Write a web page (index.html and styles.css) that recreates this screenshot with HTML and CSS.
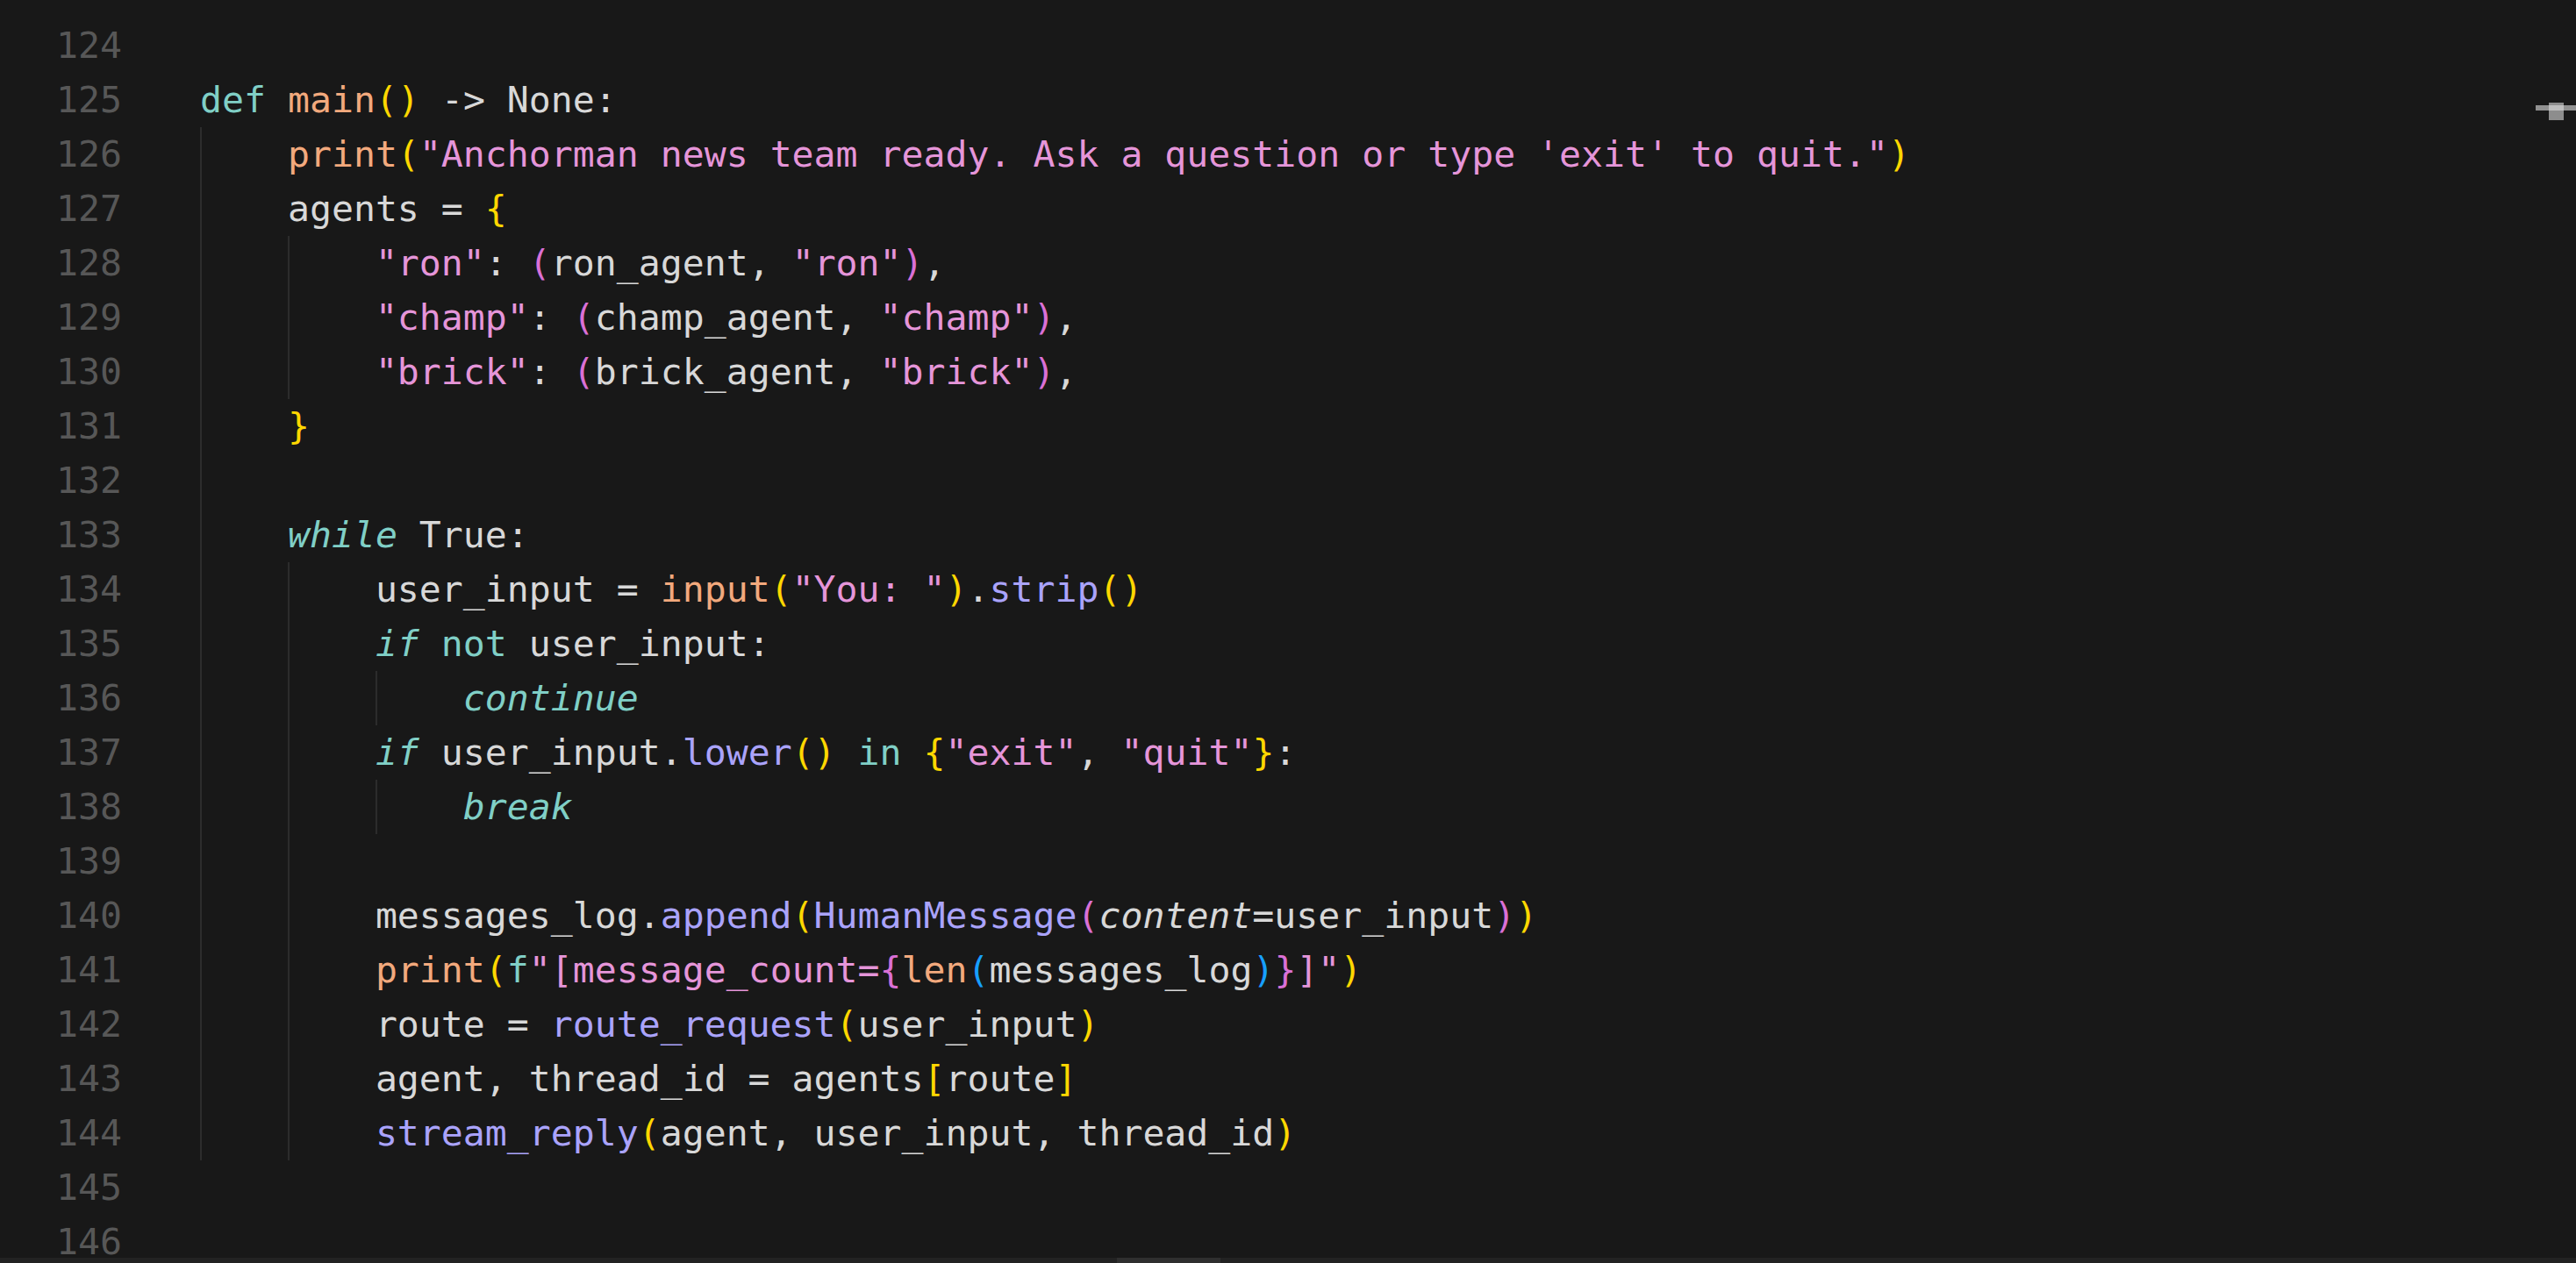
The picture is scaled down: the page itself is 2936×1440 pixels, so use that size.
FILE: index.html
```html
<!DOCTYPE html>
<html lang="en">
<head>
<meta charset="utf-8">
<title>editor</title>
<link rel="stylesheet" href="styles.css">
</head>
<body>
<div class="editor">
  <div class="gutter">
    <div class="ln">124</div><div class="ln">125</div><div class="ln">126</div><div class="ln">127</div>
    <div class="ln">128</div><div class="ln">129</div><div class="ln">130</div><div class="ln">131</div>
    <div class="ln">132</div><div class="ln">133</div><div class="ln">134</div><div class="ln">135</div>
    <div class="ln">136</div><div class="ln">137</div><div class="ln">138</div><div class="ln">139</div>
    <div class="ln">140</div><div class="ln">141</div><div class="ln">142</div><div class="ln">143</div>
    <div class="ln">144</div><div class="ln">145</div><div class="ln">146</div>
  </div>
  <div class="code">
    <div class="line"> </div>
    <div class="line"><span class="k">def</span> <span class="f">main</span><span class="b1">()</span> -&gt; None:</div>
    <div class="blk">
      <div class="line"><span class="f">print</span><span class="b1">(</span><span class="s">"Anchorman news team ready. Ask a question or type 'exit' to quit."</span><span class="b1">)</span></div>
      <div class="line">agents = <span class="b1">{</span></div>
      <div class="blk">
        <div class="line"><span class="s">"ron"</span>: <span class="b2">(</span>ron_agent, <span class="s">"ron"</span><span class="b2">)</span>,</div>
        <div class="line"><span class="s">"champ"</span>: <span class="b2">(</span>champ_agent, <span class="s">"champ"</span><span class="b2">)</span>,</div>
        <div class="line"><span class="s">"brick"</span>: <span class="b2">(</span>brick_agent, <span class="s">"brick"</span><span class="b2">)</span>,</div>
      </div>
      <div class="line"><span class="b1">}</span></div>
      <div class="line"> </div>
      <div class="line"><span class="ki">while</span> True:</div>
      <div class="blk">
        <div class="line">user_input = <span class="f">input</span><span class="b1">(</span><span class="s">"You: "</span><span class="b1">)</span>.<span class="m">strip</span><span class="b1">()</span></div>
        <div class="line"><span class="ki">if</span> <span class="k">not</span> user_input:</div>
        <div class="blk">
          <div class="line"><span class="ki">continue</span></div>
        </div>
        <div class="line"><span class="ki">if</span> user_input.<span class="m">lower</span><span class="b1">()</span> <span class="k">in</span> <span class="b1">{</span><span class="s">"exit"</span>, <span class="s">"quit"</span><span class="b1">}</span>:</div>
        <div class="blk">
          <div class="line"><span class="ki">break</span></div>
        </div>
        <div class="line"> </div>
        <div class="line">messages_log.<span class="m">append</span><span class="b1">(</span><span class="m">HumanMessage</span><span class="b2">(</span><span class="p">content</span>=user_input<span class="b2">)</span><span class="b1">)</span></div>
        <div class="line"><span class="f">print</span><span class="b1">(</span><span class="k">f</span><span class="s">"[message_count=</span><span class="b2">{</span><span class="f">len</span><span class="b3">(</span>messages_log<span class="b3">)</span><span class="b2">}</span><span class="s">]"</span><span class="b1">)</span></div>
        <div class="line">route = <span class="m">route_request</span><span class="b1">(</span>user_input<span class="b1">)</span></div>
        <div class="line">agent, thread_id = agents<span class="b1">[</span>route<span class="b1">]</span></div>
        <div class="line"><span class="m">stream_reply</span><span class="b1">(</span>agent, user_input, thread_id<span class="b1">)</span></div>
      </div>
    </div>
    <div class="line"> </div>
    <div class="line"> </div>
  </div>
</div>
<div class="ruler-bar"></div>
<div class="ruler-box"></div>
<div class="hscroll"><div class="hthumb"></div></div>
</body>
</html>
```

FILE: styles.css
```css
html, body {
  margin: 0;
  padding: 0;
  background: #181818;
  width: 2936px;
  height: 1440px;
  overflow: hidden;
}

body {
  position: relative;
  font-family: "DejaVu Sans Mono", "Liberation Mono", monospace;
  font-size: 41.5px;
  line-height: 62px;
  color: #d8d8d8;
}

.editor {
  display: grid;
  grid-template-columns: 139px 1fr;
  column-gap: 89px;
  padding-top: 21px;
}

.gutter {
  text-align: right;
  color: #575757;
}

.ln {
  height: 62px;
}

.line {
  height: 62px;
  white-space: pre;
}

.blk {
  border-left: 2px solid #2c2c2c;
  padding-left: calc(4ch - 2px);
}

.k { color: #80cfc6; }
.ki { color: #80cfc6; font-style: italic; }
.f { color: #f2a97d; }
.s { color: #e595d9; }
.m { color: #aaa3fb; }
.p { font-style: italic; color: #d8d8d8; }
.b1 { color: #ffd700; }
.b2 { color: #da70d6; }
.b3 { color: #179fff; }

.ruler-bar {
  position: absolute;
  left: 2890px;
  top: 120px;
  width: 46px;
  height: 6px;
  background: rgba(220, 220, 220, 0.62);
}

.ruler-box {
  position: absolute;
  left: 2905px;
  top: 117px;
  width: 17px;
  height: 20px;
  background: rgba(220, 220, 220, 0.6);
}

.hscroll {
  position: absolute;
  left: 0;
  right: 0;
  bottom: 0;
  height: 6px;
  background: #222222;
}

.hthumb {
  margin-left: 1273px;
  width: 118px;
  height: 6px;
  background: #2f2f2f;
}
```
